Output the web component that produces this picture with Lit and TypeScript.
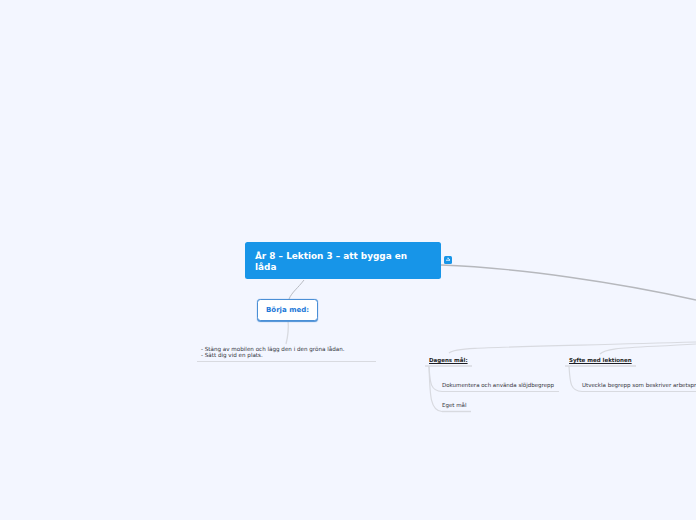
import { LitElement, html, css, svg } from "lit";
import { customElement } from "lit/decorators.js";

const soft = "#d8dae0";
const links = [
  { d: "M441 265 C520 268 620 283 696 300", w: 1.3, c: "#b6b8bd" },
  { d: "M304 280 C298 288 292 292 289 299", w: 1, c: "#b8bbc2" },
  { d: "M288 320 C289 330 288 336 286 344", w: 1.3, c: soft },
  { d: "M449 353 C455 347 480 348 696 342", w: 1.2, c: soft },
  { d: "M600 354 C606 347 630 348 696 344", w: 1.2, c: soft },
  { d: "M429 366 C430 382 430 391 442 391.5", w: 1.2, c: soft },
  { d: "M429 366 C430 395 430 411 442 411.5", w: 1.2, c: soft },
  { d: "M569 366 C570 382 570 391 582 391.5", w: 1.2, c: soft },
  { d: "M197 361.5 H376", w: 1.2, c: soft },
  { d: "M425 366 H472", w: 1.4, c: soft },
  { d: "M565 366 H636", w: 1.4, c: soft },
  { d: "M442 391.5 H559", w: 1.2, c: soft },
  { d: "M442 411.5 H471", w: 1.4, c: soft },
  { d: "M582 391.5 H696", w: 1.2, c: soft },
];

const labels = [
  { t: "Dagens mål:", x: 429, y: 357, u: true },
  { t: "Syfte med lektionen", x: 569, y: 357, u: true },
  { t: "Dokumentera och använda slöjdbegrepp", x: 442, y: 382, u: false },
  { t: "Eget mål", x: 442, y: 402, u: false },
  { t: "Utveckla begrepp som beskriver arbetsprocessen", x: 582, y: 382, u: false },
];

@customElement("app-root")
export class AppRoot extends LitElement {
  static styles = css`
    :host {
      display: block;
      position: relative;
      width: 696px;
      height: 520px;
      overflow: hidden;
      background: #f3f6ff;
      font-family: "DejaVu Sans", sans-serif;
    }
    .links {
      position: absolute;
      inset: 0;
    }
    .root {
      position: absolute;
      left: 245px;
      top: 242px;
      width: 195.5px;
      height: 37px;
      box-sizing: border-box;
      padding: 9px 10px 7px;
      background: #1795e8;
      border-radius: 2.5px;
      color: #fff;
      font-size: 8.9px;
      font-weight: 700;
      line-height: 11px;
    }
    .toggle {
      position: absolute;
      left: 444px;
      top: 256px;
      width: 8px;
      height: 8px;
      display: flex;
      background: #1795e8;
      border-radius: 1.5px;
    }
    .start {
      position: absolute;
      left: 257px;
      top: 299px;
      width: 61px;
      height: 22px;
      box-sizing: border-box;
      display: flex;
      align-items: center;
      justify-content: center;
      background: #fff;
      border: 1.2px solid #4a8fd6;
      border-radius: 3.5px;
      box-shadow: 0 0.5px 1px #4a8fd6;
      color: #1a78d8;
      font-size: 7px;
      font-weight: 700;
    }
    .note {
      position: absolute;
      left: 201px;
      top: 346px;
      font-size: 5.6px;
      line-height: 6.2px;
      color: #2e3038;
      white-space: pre;
    }
    .label {
      position: absolute;
      font-size: 5.5px;
      line-height: 7px;
      color: #33353c;
      white-space: nowrap;
    }
    .label.head {
      font-weight: 700;
      color: #1d1e24;
      text-decoration: underline;
    }
  `;

  render() {
    return html`
      <svg class="links" width="696" height="520" fill="none">
        ${links.map(
          (l) => svg`<path d=${l.d} stroke=${l.c} stroke-width=${l.w}></path>`
        )}
      </svg>
      <div class="root">År 8 – Lektion 3 – att bygga en låda</div>
      <div class="toggle">
        <svg width="8" height="8" viewBox="0 0 8 8" fill="none">
          <path d="M2 4.2 H6 M4.4 2.6 L6 4.2 M4 3 V1.6" stroke="#fff" stroke-width="0.9"></path>
        </svg>
      </div>
      <div class="start">Börja med:</div>
      <div class="note">- Stäng av mobilen och lägg den i den gröna lådan.
- Sätt dig vid en plats.</div>
      ${labels.map(
        (l) => html`<div
          class="label ${l.u ? "head" : ""}"
          style="left:${l.x}px;top:${l.y}px"
        >${l.t}</div>`
      )}
    `;
  }
}
